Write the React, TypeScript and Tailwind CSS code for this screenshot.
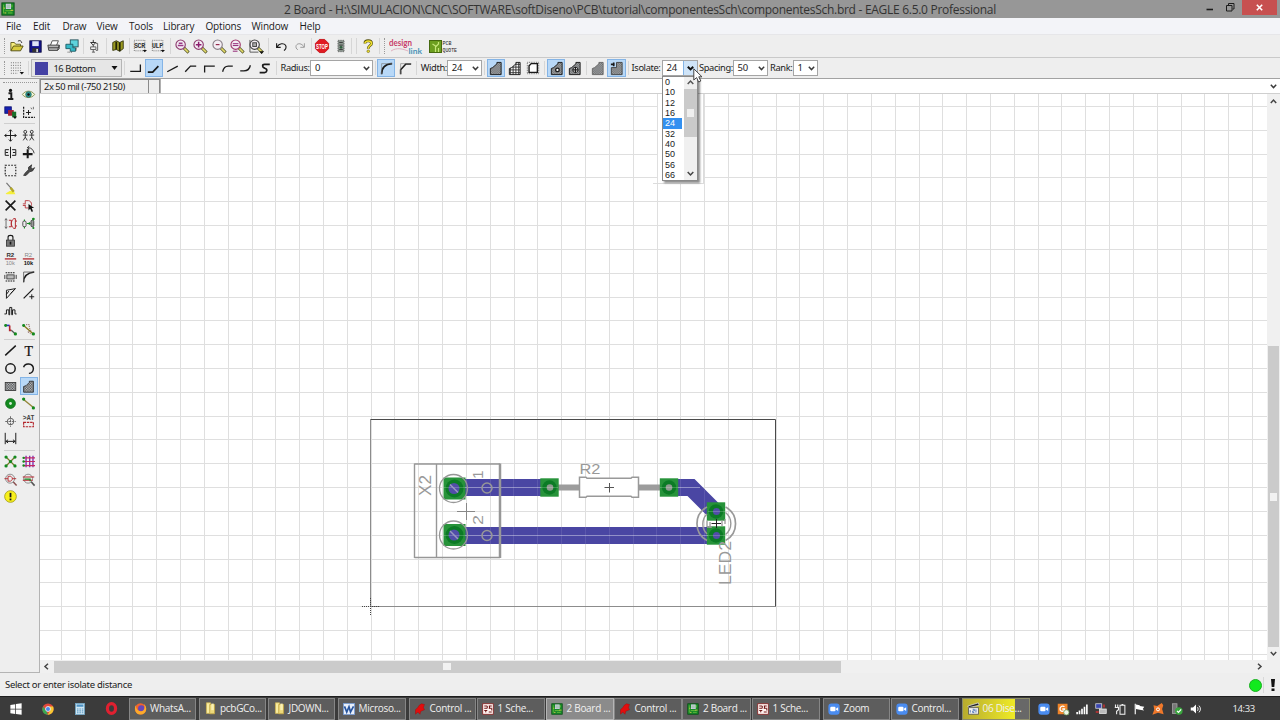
import type { ReactNode } from 'react'

function Icon({ children, size = 16 }: { children: ReactNode; size?: number }) {
  return (
    <svg width={size} height={size} viewBox="0 0 16 16" fill="none" stroke="#1a1a1a" strokeWidth="1" className="shrink-0 overflow-visible">
      {children}
    </svg>
  )
}

function Sep({ className = '' }: { className?: string }) {
  return (
    <div className={`flex h-full shrink-0 justify-center py-[3px] ${className}`}>
      <div className="w-px bg-[#d6d6d6]" />
    </div>
  )
}

function Handle({ className = '' }: { className?: string }) {
  return (
    <div className={`flex h-full shrink-0 justify-center py-[3px] ${className}`}>
      <div className="w-px border-l border-dotted border-[#9a9a9a]" />
    </div>
  )
}

function Tool({ children, active = false, className = 'w-[18.4px] h-[18px]' }: { children: ReactNode; active?: boolean; className?: string }) {
  return (
    <button className={`flex shrink-0 items-center justify-center ${className} ${active ? 'border border-[#84b4e6] bg-[#b8d8f7]' : ''}`}>
      {children}
    </button>
  )
}

function Chevron() {
  return (
    <svg width="7" height="5" viewBox="0 0 7 5" fill="none" stroke="#3a3a3a" strokeWidth="1.4" className="shrink-0">
      <path d="M0.8 0.7L3.5 3.6L6.2 0.7" />
    </svg>
  )
}

function Combo({ value, className }: { value: string; className: string }) {
  return (
    <div className={`flex h-[16px] shrink-0 items-center justify-between border border-[#a5a5a5] bg-white pt-px pr-[2px] pl-1 text-[9.5px] tracking-[-0.2px] ${className}`}>
      <span>{value}</span>
      <Chevron />
    </div>
  )
}

function Label({ children, className }: { children: string; className: string }) {
  return <span className={`shrink-0 text-[9.3px] tracking-[-0.38px] whitespace-nowrap ${className}`}>{children}</span>
}

/* ---------- shared glyphs ---------- */

function Hatch() {
  return (
    <defs>
      <pattern id="dots" width="2" height="2" patternUnits="userSpaceOnUse">
        <rect width="2" height="2" fill="#c4c8cc" />
        <rect width="1" height="1" fill="#4a4a4a" />
        <rect x="1" y="1" width="1" height="1" fill="#4a4a4a" />
      </pattern>
      <pattern id="mesh" width="3" height="3" patternUnits="userSpaceOnUse">
        <rect width="3" height="3" fill="#f8f8f8" />
        <path d="M0 0.5H3M0.5 0V3" stroke="#333" />
      </pattern>
    </defs>
  )
}

const POLY = 'M2.500 14.500V8L5 7L9.500 3V1.500H14V14.500Z'

function Lens({ color, children }: { color: string; children?: ReactNode }) {
  return (
    <Icon size={15}>
      <path d="M9.500 9.500L14.500 14.500" stroke="#55552a" strokeWidth="3.200" />
      <path d="M10 10L14 14" stroke="#e4dc6a" strokeWidth="1.600" />
      <circle cx="6" cy="6" r="5" fill="#f4eef4" stroke={color} strokeWidth="1.200" />
      {children}
    </Icon>
  )
}

function BoardIcon({ size = 13 }: { size?: number }) {
  return (
    <Icon size={size}>
      <rect x="1" y="1" width="14" height="14" fill="#18882a" stroke="#064d10" />
      <rect x="6" y="2.500" width="5" height="5" fill="#a8c9b4" stroke="#dce" />
      <path d="M3 3V13M5 10H12M12.500 3V6M8 12.500H13" stroke="#6fc43c" />
      <path d="M11 9.500H14M3 7H4.500M4 12.500H6" stroke="#f2d24c" />
    </Icon>
  )
}

function SchemIcon() {
  return (
    <Icon size={12}>
      <rect x="1" y="1" width="14" height="14" fill="#fff4f2" stroke="#8c1c1c" />
      <path d="M3 4H7V7H3M9 4H13M9 7H13V10M3 10H7M9 12H13M5 12.500V10M10 4V7" stroke="#6e1313" strokeWidth="1.300" />
    </Icon>
  )
}

function EagleIcon() {
  return (
    <Icon size={12}>
      <path d="M10 1L14 2L12.500 6L14 9L9 11L8 15L5 12L2 15L2 9L5 6L7 3Z" fill="#e20d0d" stroke="#a00" strokeWidth="0.500" />
    </Icon>
  )
}

function ZoomApp({ size = 13 }: { size?: number }) {
  return (
    <Icon size={size}>
      <rect x="0.500" y="0.500" width="15" height="15" rx="4" fill="#4a8cf0" stroke="none" />
      <rect x="3" y="5" width="7" height="6" rx="1.500" fill="#fff" stroke="none" />
      <path d="M10.500 7.500L13.500 5.500V10.500L10.500 8.500Z" fill="#fff" stroke="none" />
    </Icon>
  )
}

function FolderIcon() {
  return (
    <Icon size={13}>
      <path d="M3 1H8V14H3Z" fill="#f8eca0" stroke="#cdb455" />
      <path d="M7 3H13V14.500H7Z" fill="#ecd97a" stroke="#c2a443" />
      <path d="M9 2H12V10H9Z" fill="#f9f0b4" stroke="none" />
    </Icon>
  )
}

/* ---------- chrome ---------- */

function TitleBar() {
  return (
    <header className="relative flex h-[18px] shrink-0 items-center justify-between bg-[#979797]">
      <div className="pl-[1px]"><BoardIcon size={14} /></div>
      <h1 className="absolute inset-x-0 text-center text-[12px] leading-[19px] tracking-[-0.285px] text-[#333]" style={{ fontFamily: '"Open Sans", "Noto Sans", sans-serif' }}>
        2 Board - H:\SIMULACION\CNC\SOFTWARE\softDiseno\PCB\tutorial\componentesSch\componentesSch.brd - EAGLE 6.5.0 Professional
      </h1>
      <div className="relative flex h-full items-start">
        <svg width="36" height="15" viewBox="0 0 36 15" fill="none" stroke="#1c1c1c">
          <path d="M0.500 9.500H7" strokeWidth="1.600" />
          <path d="M20.500 5.500H26V11H20.500ZM22.500 5V3.500H28V9H26.500" />
        </svg>
        <div className="mr-[3px] flex h-[15px] w-[35px] items-center justify-center bg-[#c75050]">
          <svg width="7" height="7" viewBox="0 0 7 7" stroke="#fff" strokeWidth="1.600"><path d="M0.800 0.800L6.200 6.200M6.200 0.800L0.800 6.200" /></svg>
        </div>
      </div>
    </header>
  )
}

function MenuBar() {
  return (
    <nav className="flex h-[17px] shrink-0 items-center border-b border-[#e6e6e9] bg-[#f3f4f8] pt-[1px] pl-[6px] text-[10px] tracking-[-0.18px] text-[#1b1b1b]" style={{ fontFamily: '"Open Sans", "Noto Sans", sans-serif' }}>
      <span className="w-[27px]">File</span>
      <span className="w-[29.500px]">Edit</span>
      <span className="w-[34px]">Draw</span>
      <span className="w-[32.500px]">View</span>
      <span className="w-[34px]">Tools</span>
      <span className="w-[42.500px]">Library</span>
      <span className="w-[46px]">Options</span>
      <span className="w-[48px]">Window</span>
      <span>Help</span>
    </nav>
  )
}

function MainToolbar() {
  return (
    <div className="flex h-[23px] shrink-0 items-center border-b border-[#c9c9c9] bg-[#eee]">
      <Handle className="w-[8px]" />
      <Tool>
        <Icon size={14}><path d="M1 13V4H5L6.500 6H12V8" fill="#f6ee7c" stroke="#5b5712" /><path d="M1 13.500L4 8H15L12 13.500Z" fill="#d8cc3e" stroke="#4a460d" /><path d="M9 2.500C11 1 13 2 13.500 4.500" /></Icon>
      </Tool>
      <Tool>
        <Icon size={13}><rect x="1" y="1" width="14" height="14" fill="#14148c" stroke="#05053b" /><rect x="4" y="1.500" width="8" height="6" fill="#dfe4f6" stroke="none" /><rect x="4" y="10" width="8" height="5" fill="#333" stroke="none" /><rect x="9" y="11" width="2" height="4" fill="#ddd" stroke="none" /></Icon>
      </Tool>
      <Tool>
        <Icon size={14}><path d="M4 7L6 2H13L11 7" fill="#fff" stroke="#444" /><path d="M1 7H14L12 13H2Z" fill="#b5b5b5" stroke="#333" /><path d="M2 10H13M14 7V11L12 13" stroke="#333" /></Icon>
      </Tool>
      <Tool>
        <Icon size={14}><rect x="6" y="1" width="9" height="8" fill="#5ed3dc" stroke="#244c55" /><path d="M1 6H9V10H12V14H6V11H1Z" fill="#35b9c7" stroke="#1c5962" /><path d="M3 15H8M13 10V13" stroke="#333" strokeDasharray="1 1" /></Icon>
      </Tool>
      <Sep className="w-[3px]" />
      <Tool className="h-[18px] w-[20px]">
        <Icon size={14}><path d="M6 1V4M3 4H9L6 7ZM6 7V9" /><path d="M3 9H9V12H3ZM6 12V15M9 5H11V13H9M4.500 15H8" stroke="#555" /></Icon>
      </Tool>
      <Sep className="w-[4px]" />
      <Tool className="h-[18px] w-[19px]">
        <Icon size={14}><path d="M2 4L6 2L10 4L14 2V11L10 14L6 12L2 13Z" fill="#9a9a20" stroke="#34340a" /><path d="M6 3V12M10 4V14" stroke="#232305" strokeWidth="2" /></Icon>
      </Tool>
      <Sep className="w-[3px]" />
      {['SCR', 'ULP'].map((t) => (
        <Tool key={t}>
          <Icon size={14}>
            <rect x="1.500" y="1.500" width="12" height="12" stroke="#555" strokeDasharray="1 1.400" />
            <text x="1" y="9.800" fontSize="7.500" textLength="13" fontWeight="bold" fontFamily="Liberation Mono, monospace" fill="#333" stroke="none">{t}</text>
            <path d="M11 12.500H16L13.500 15Z" fill="#111" stroke="none" />
          </Icon>
        </Tool>
      ))}
      <Sep className="w-[6px]" />
      <Tool><Lens color="#8d3a6e"><path d="M3 7H9M4 4.500H8" stroke="#9a3a86" strokeWidth="1.500" /></Lens></Tool>
      <Tool><Lens color="#8d3a6e"><path d="M3 6H9M6 3V9" stroke="#8d1c6e" strokeWidth="1.600" /></Lens></Tool>
      <Tool><Lens color="#8a8088"><path d="M4 6H8" stroke="#8d1c3e" strokeWidth="1.200" /></Lens></Tool>
      <Tool><Lens color="#a03a6e"><path d="M3 5H9M3 7H9M3 13H8" stroke="#8d1c6e" /></Lens></Tool>
      <Tool><Lens color="#444"><rect x="4" y="4" width="4" height="4" fill="#aaa" stroke="#444" /><path d="M1 1V14H10" stroke="#555" /><path d="M11 13H16L13.500 16Z" fill="#111" stroke="none" /></Lens></Tool>
      <Sep className="w-[7px]" />
      <Tool><Icon size={13}><path d="M2 4V9H7M2.500 8.500C5 4 11 3.500 13 6.500C14.500 9 13 12 11 13" strokeWidth="1.400" /></Icon></Tool>
      <Tool><Icon size={13}><path d="M14 4V9H9M13.500 8.500C11 4 6 3.500 4 6.500C3 9 4 11 6 12" stroke="#9a9a9a" strokeWidth="1.200" /></Icon></Tool>
      <Sep className="w-[4px]" />
      <Tool>
        <Icon size={14}><path d="M5 0.500H11L15.500 5V11L11 15.500H5L0.500 11V5Z" fill="#e01b22" stroke="#c30d14" /><text x="1.200" y="10.900" fontSize="7.500" fontWeight="bold" textLength="13.600" lengthAdjust="spacingAndGlyphs" fontFamily="Liberation Sans, sans-serif" fill="#fff" stroke="none">STOP</text></Icon>
      </Tool>
      <Tool>
        <Icon size={14}><rect x="4.500" y="1.500" width="7" height="13" fill="#8b958e" stroke="#555" strokeDasharray="1 1" /><path d="M6 4H10M6 7H10M6 12H10" stroke="#333" /><circle cx="8" cy="9.500" r="1.500" fill="#2f5f3d" stroke="none" /></Icon>
      </Tool>
      <Sep className="w-[4px]" />
      <Sep className="w-[5px]" />
      <Tool className="h-[18px] w-[19px]">
        <Icon size={14}><path d="M4.500 5C4.500 1 12 1 12 5C12 7.500 8.300 7.500 8.300 11" stroke="#55500c" strokeWidth="3.200" /><path d="M4.500 5C4.500 1.500 12 1.500 12 5C12 7.500 8.300 7.500 8.300 11" stroke="#f0e030" strokeWidth="1.800" /><circle cx="8.300" cy="14" r="1.500" fill="#f0e030" stroke="#55500c" strokeWidth="0.600" /></Icon>
      </Tool>
      <Sep className="w-[4px]" />
      <Handle className="w-[5px]" />
      <svg width="36" height="18" viewBox="0 0 36 18" className="ml-[2px] shrink-0" fontFamily="Lato, sans-serif" fontWeight="bold">
        <text x="0" y="8.500" fontSize="9" textLength="23" lengthAdjust="spacingAndGlyphs" fill="#c8406a">design</text>
        <text x="19.500" y="16.500" fontSize="8" textLength="13.500" lengthAdjust="spacingAndGlyphs" fill="#4b94b8">link</text>
        <path d="M2 14C8 10 14 12 19 14" stroke="#dba0b4" strokeWidth="0.800" fill="none" />
      </svg>
      <svg width="30" height="16" viewBox="0 0 30 16" className="ml-[4px] shrink-0">
        <rect x="0.500" y="2.500" width="12" height="12" fill="#6c9e1f" stroke="#46690f" />
        <path d="M6.500 14V8L3.500 6M6.500 9L9.500 6V4M9.500 10V14" stroke="#c6e67a" strokeWidth="1.200" fill="none" />
        <text x="13.500" y="7" fontSize="6" textLength="9" lengthAdjust="spacingAndGlyphs" fontFamily="Liberation Mono, monospace" fill="#222">PCB</text>
        <text x="13.500" y="14" fontSize="6" textLength="14.500" lengthAdjust="spacingAndGlyphs" fontFamily="Liberation Mono, monospace" fill="#222">QUOTE</text>
      </svg>
    </div>
  )
}

const BENDS = [
  'M1.500 11.500H14V3',
  'M1 12.500H7L14 5',
  'M1.500 12L14.500 5',
  'M1.500 12L8 5H15',
  'M2 13V5H14.500',
  'M2 12C3 7 6 5 9 5H14.500',
  'M1.500 11H6C10 11 13 9 14 4',
  'M14.500 3H8C5 3 5 6.500 8 7.500L9 8C12 9 11 13 8 13H2',
]

function ParamToolbar() {
  return (
    <div className="relative z-20 flex h-[21px] shrink-0 items-center border-b border-[#a2a2a2] bg-[#eee]">
      <Handle className="w-[8px]" />
      <Tool>
        <Icon size={14}><path d="M1 2H13M1 5H13M1 8H13M1 11H13M1 14H9" stroke="#555" strokeDasharray="1 1.600" /><path d="M11 12.500H16L13.500 15.500Z" fill="#111" stroke="none" /></Icon>
      </Tool>
      <Sep className="w-[5px]" />
      <div className="flex h-[18px] w-[91px] shrink-0 items-center border border-[#b5b5b5] bg-[#e6e6e6] px-[3px]">
        <div className="h-[13px] w-[13px] bg-[#4542a4]" />
        <span className="ml-[5px] flex-1 pt-px text-[9.3px] tracking-[-0.4px]">16 Bottom</span>
        <svg width="7" height="4" viewBox="0 0 7 4"><path d="M0.500 0H6.500L3.500 4Z" fill="#111" /></svg>
      </div>
      <Sep className="w-[4px]" />
      {BENDS.map((d, i) => (
        <Tool key={d} active={i === 1}>
          <Icon size={13}><path d={d} strokeWidth={i === 1 || i === 7 ? 2.1 : 1.6} /></Icon>
        </Tool>
      ))}
      <Sep className="w-[5px]" />
      <Label className="w-[31.500px] pl-[2px]">Radius:</Label>
      <Combo value="0" className="w-[63px]" />
      <Sep className="w-[4px]" />
      <Tool active><Icon size={14}><path d="M3 15C3 8 7 3.500 15 3" strokeWidth="1.800" /><path d="M3 15V3H15" stroke="#777" strokeWidth="0.700" /></Icon></Tool>
      <Tool><Icon size={14}><path d="M3 15V10L9 3.500H15" strokeWidth="1.800" /><path d="M3 15V3H15" stroke="#777" strokeWidth="0.700" /></Icon></Tool>
      <Sep className="w-[5px]" />
      <Label className="w-[28px] pl-[2px]">Width:</Label>
      <Combo value="24" className="w-[35px]" />
      <Sep className="w-[5px]" />
      <Tool active><Icon size={15}><path d={POLY} fill="url(#dots)" /></Icon></Tool>
      <Tool><Icon size={15}><path d={POLY} fill="url(#mesh)" /></Icon></Tool>
      <Tool>
        <Icon size={14}><path d="M3.500 13V5.500L6 3H13V13Z" fill="#fff" strokeWidth="1.600" /><rect x="1.500" y="1.500" width="13" height="13" stroke="#555" strokeDasharray="1 1" /></Icon>
      </Tool>
      <Sep className="w-[5px]" />
      <Tool active><Icon size={15}><path d={POLY} fill="url(#dots)" /><circle cx="9" cy="9.500" r="1.900" fill="#fff" strokeWidth="1.400" /></Icon></Tool>
      <Tool><Icon size={15}><path d={POLY} fill="url(#dots)" /><circle cx="9" cy="9.500" r="2.800" fill="#fff" /><path d="M9 6.500V12.500M6 9.500H12" strokeWidth="1.300" /></Icon></Tool>
      <Sep className="w-[5px]" />
      <Tool><Icon size={15}><path d={POLY} fill="url(#dots)" stroke="#666" /></Icon></Tool>
      <Tool active><Icon size={15}><path d="M2.500 14.500V7L8 7V1.500H14V14.500Z" fill="url(#dots)" stroke="#444" /><path d="M2 3.500H6M5 1.500V5.500" strokeWidth="1.800" /></Icon></Tool>
      <Sep className="w-[5px]" />
      <Label className="w-[31px] pl-[1px]">Isolate:</Label>
      <IsolateCombo />
      <Label className="w-[35px] pl-[1.500px]">Spacing:</Label>
      <Combo value="50" className="w-[35px]" />
      <Label className="w-[25px] pl-[2.500px]">Rank:</Label>
      <Combo value="1" className="w-[25px]" />
    </div>
  )
}

const ISOLATE = ['0', '10', '12', '16', '24', '32', '40', '50', '56', '66']

function IsolateCombo() {
  return (
    <div className="relative h-[16px] w-[36px] shrink-0">
      <div className="flex h-full border border-[#a5a5a5] bg-white text-[9.5px] tracking-[-0.2px]">
        <span className="flex w-[20px] items-center pt-px pl-1">24</span>
        <span className="flex flex-1 items-center justify-center border-l border-[#84b4e6] bg-[#cfe4f8]">
          <svg width="7" height="5" viewBox="0 0 7 5" fill="none" stroke="#111" strokeWidth="2"><path d="M0.800 0.700L3.500 3.400L6.200 0.700" /></svg>
        </span>
      </div>
      <div className="absolute top-[16px] left-0 flex h-[105px] w-[36px] border border-[#8a8a8a] bg-white shadow-[2px_2px_2px_rgba(0,0,0,0.45)]">
        <ul className="w-[21px] text-[9px] leading-[10.35px]" style={{ fontFamily: '"Liberation Sans", sans-serif' }}>
          {ISOLATE.map((v) => (
            <li key={v} className={`h-[10.35px] pl-[2.5px] ${v === '24' ? 'mr-[1.5px] bg-[#3390f0] text-white' : ''}`}>{v}</li>
          ))}
        </ul>
        <div className="flex flex-1 flex-col items-center bg-[#f0f0f0]">
          <svg width="7" height="12" viewBox="0 0 7 12" fill="none" stroke="#555" strokeWidth="1.500" className="shrink-0"><path d="M0.700 7L3.500 4L6.300 7" /></svg>
          <div className="flex h-[48px] w-full items-center justify-center bg-[#cacaca]">
            <div className="h-[8px] w-[7px] bg-[#efefef]" />
          </div>
          <svg width="7" height="6" viewBox="0 0 7 6" fill="none" stroke="#444" strokeWidth="1.500" className="mt-auto mb-[3px]"><path d="M0.700 1L3.500 4L6.300 1" /></svg>
        </div>
      </div>
      {/* mouse pointer over the arrow button */}
      <svg width="13" height="18" viewBox="0 0 13 18" className="absolute top-[8px] left-[31px]">
        <path d="M0.800 0.800V12L3.600 9.600L5.600 14L7.800 13L5.800 8.800H9Z" fill="#fff" stroke="#444" />
      </svg>
    </div>
  )
}

function CommandRow() {
  return (
    <div className="flex h-[15px] shrink-0 border-b border-[#cfcfcf] bg-[#eee]">
      <div className="w-[108px] border-t border-l border-[#8a8a8a] pl-[3px] text-[9.3px] leading-[13px] whitespace-nowrap">
        <span className="tracking-[-0.43px]">2x 50 mil (-750 2150)</span>
      </div>
      <div className="w-[12px] border-t border-x border-[#8a8a8a]" />
      <div className="flex flex-1 items-center justify-end border-l border-[#b0b0b0] bg-white pr-[3px]"><Chevron /></div>
    </div>
  )
}

/* ---------- left palette ---------- */

const RED = '#b3262c'
const GREEN = '#138a1f'

const GROUP_A: ReactNode[] = [
  <><circle cx="8" cy="3" r="2" fill="#111" stroke="none" /><path d="M5.500 6.500H9V13M5 13.500H11.500" strokeWidth="2.400" /></>,
  <><path d="M0.500 8C4 2.500 12 2.500 15.500 8C12 13 4 13 0.500 8Z" fill="#f5f7d8" stroke="#71803a" /><circle cx="8" cy="8" r="3.400" fill="#35a5a0" stroke="#14605c" /><circle cx="8" cy="8" r="1.300" fill="#111" /></>,
  <><rect x="1" y="1" width="8" height="8" fill="#1520b0" stroke="#0a1070" /><rect x="5" y="5" width="7" height="7" fill="#a41f30" stroke="none" /><rect x="10" y="7" width="5" height="7" fill="#17702a" stroke="none" /><path d="M11 13H16L13.500 16Z" fill="#111" stroke="none" /></>,
  <><path d="M2 1V14H16" strokeDasharray="2.500 1.200" strokeWidth="1.500" /><path d="M5 8H11M8 5V11" strokeWidth="1.200" /><path d="M11 2L12 4M14 1V4" stroke="#555" /></>,
]

const GROUP_B: ReactNode[] = [
  <path d="M8 1V15M1 8H15M6 3L8 1L10 3M6 13L8 15L10 13M3 6L1 8L3 10M13 6L15 8L13 10" strokeWidth="1.200" />,
  <><circle cx="4" cy="3.500" r="1.800" /><circle cx="12" cy="3.500" r="1.800" /><path d="M4 5V10L1.500 14M4 10L6.500 14M1 7.500H7M12 5V10L9.500 14M12 10L14.500 14M9 7.500H15" /></>,
  <path d="M8 1V15M6 4.500H1.500V11.500H6M10 4.500H14.500V11.500H10M2 8H5M11 8H14" strokeWidth="1.200" />,
  <><path d="M7 4V15M1 10H13" strokeWidth="2.500" /><path d="M7 2C12 2 14 5 15 9M9 0L6.500 2L9 4" /></>,
  <rect x="1.500" y="1.500" width="13" height="13" strokeDasharray="2 1.700" strokeWidth="1.400" />,
  <path d="M2 14L4 11L8 7V4L12 1L11 4L13 6L15.500 4.500L13 8.500L9.500 9.500L5 14Z" fill="#4a4a4a" stroke="#333" />,
  <><path d="M2 14L7 11H12L14 15H3Z" fill="#f5ef3c" stroke="none" /><path d="M3 1L10 9" stroke="#777" strokeWidth="1.500" /><path d="M8 7L12 12" stroke="#b3a82b" strokeWidth="3" /></>,
  null,
  <path d="M2 2L14 14M14 2L2 14" strokeWidth="2" />,
  <><path d="M1 6H4V2H8C13 3 13 10 8 11H4V7M1 8H4" stroke={RED} /><path d="M8 6V14L10 12L12 16L13.500 15L12 11H15Z" fill="#111" stroke="none" /></>,
  <><path d="M6 4H9V12H6M14 2H12C8 5 8 11 12 14H14V2M14 5H16M14 11H16" stroke={RED} strokeWidth="1.200" /><path d="M2.500 2V14M1 4L2.500 2L4 4M1 12L2.500 14L4 12" stroke="#555" /></>,
  <><rect x="1" y="5" width="4" height="7" rx="1.500" stroke="#333" /><path d="M3 3V5M3 12V14M6 8H10M8.500 6.500L10 8L8.500 9.500" stroke={GREEN} strokeWidth="1.300" /><rect x="11" y="4" width="3.500" height="8" rx="1.500" fill="#999" stroke="#333" /><circle cx="14" cy="2.500" r="1.700" fill={GREEN} stroke="none" /><circle cx="14" cy="13.500" r="1.300" fill={GREEN} stroke="none" /></>,
  <><path d="M5 8V4C5 1 11 1 11 4V8" strokeWidth="1.400" /><rect x="3" y="7.500" width="10" height="7.500" fill="#777" stroke="#333" /><path d="M8 9.500V13" strokeWidth="2" /></>,
  null,
  <><text x="3" y="6.500" fontSize="7.500" fontWeight="bold" fontFamily="Liberation Sans, sans-serif" fill="#333" stroke="none">R2</text><path d="M1 8.500H15" stroke={RED} strokeWidth="1.600" /><text x="2" y="16" fontSize="7" fontFamily="Liberation Sans, sans-serif" fill="#888" stroke="none">10k</text></>,
  <><text x="3" y="6.500" fontSize="7.500" fontFamily="Liberation Sans, sans-serif" fill="#888" stroke="none">R2</text><path d="M1 8.500H15" stroke={RED} strokeWidth="1.600" /><text x="2" y="16" fontSize="7" fontWeight="bold" fontFamily="Liberation Sans, sans-serif" fill="#111" stroke="none">10k</text></>,
  <><rect x="3.500" y="6" width="9" height="5" fill="#bbb" stroke="#333" /><path d="M2 3.500H14M2 13.500H14" strokeDasharray="2 1" strokeWidth="1.300" /><path d="M1 6V11M15 6V11" /></>,
  <><path d="M2 15C2 8 7 3.500 15 2.500" strokeWidth="1.700" /><path d="M2 15V2.500H15" stroke="#555" /></>,
  <path d="M3 14V4L14 2L3 14M6 5L3 9M8 8L14 2" strokeWidth="1.200" />,
  <><path d="M2 14L14 2" strokeWidth="1.600" /><path d="M9 12H15M12 9V15" strokeWidth="1.200" /></>,
  <path d="M0.500 11H3V6H6V12H7V3H9.500V12H10.500V6H13.500V11H15.500" strokeWidth="1.200" />,
  null,
  <><path d="M2 3H7" stroke="#2430c0" strokeWidth="2" /><path d="M7 3V9H9" stroke={RED} strokeWidth="2" /><path d="M9 9L14 13.500" stroke="#555" strokeWidth="1.500" /><circle cx="2" cy="3" r="1.800" fill={GREEN} stroke="none" /><circle cx="14" cy="13.500" r="2" fill={GREEN} stroke="none" /></>,
  <><path d="M2 3L14 13.500" stroke="#8a7c20" strokeWidth="1.800" /><path d="M5 2H9V6L11 9L7 11L12 14" stroke="#7a4a40" strokeDasharray="1.500 1.200" /><circle cx="2" cy="3" r="1.800" fill={GREEN} stroke="none" /><circle cx="14" cy="13.500" r="2" fill={GREEN} stroke="none" /></>,
]

const GROUP_C: ReactNode[] = [
  <path d="M1.500 14L14.500 2" strokeWidth="1.800" />,
  <text x="3" y="14.500" fontSize="17" fontFamily="Liberation Serif, serif" fill="#111" stroke="#111" strokeWidth="0.300">T</text>,
  <circle cx="8" cy="8" r="5.800" strokeWidth="1.800" />,
  <path d="M2 6.500C3.500 0.500 13.500 1 14 8C14 12 11 14 8.500 14" strokeWidth="1.800" />,
  <rect x="1.500" y="3" width="13" height="10" fill="url(#dots)" stroke="#333" />,
  <path d="M2 15V8L5 7L9 3V1.500H14V15Z" fill="url(#dots)" stroke="#222" />,
  <><circle cx="8" cy="8" r="6" fill={GREEN} stroke="#0a6a14" /><circle cx="8" cy="8" r="1.700" fill="#d8ecd8" stroke="none" /></>,
  <><path d="M2 3L14 13" stroke="#94873a" strokeWidth="1.700" /><circle cx="2" cy="2.500" r="2" fill={GREEN} stroke="none" /><circle cx="14" cy="13.500" r="2" fill={GREEN} stroke="none" /></>,
  <><circle cx="8" cy="8" r="4" stroke="#444" /><path d="M8 1.500V14.500M1.500 8H14.500" stroke="#555" strokeDasharray="3 1" /></>,
  <><text x="1" y="6.500" fontSize="8" fontFamily="Liberation Mono, monospace" fontWeight="bold" fill="#444" stroke="none">&gt;AT</text><rect x="2" y="9" width="12" height="5.500" stroke={RED} strokeWidth="1.400" strokeDasharray="3 1" /></>,
  <path d="M1.500 1V15M14.500 1V15M2 11.500H14M5 9.500L2.500 11.500L5 13.500M11 9.500L13.500 11.500L11 13.500" strokeWidth="1.200" />,
]

const GROUP_D: ReactNode[] = [
  <><path d="M2.500 2.500L13.500 13.500M13.500 2.500L2.500 13.500" stroke="#75772a" strokeWidth="1.500" /><g fill={GREEN} stroke="none"><circle cx="2.500" cy="2.500" r="2" /><circle cx="13.500" cy="2.500" r="2" /><circle cx="2.500" cy="13.500" r="2" /><circle cx="13.500" cy="13.500" r="2" /><circle cx="8" cy="8" r="2" /></g></>,
  <><path d="M5 1V15M9.500 1V15M13.500 1V15" stroke="#7a25b0" strokeWidth="1.600" /><path d="M2 3.500H16M2 8H16M2 13H16" stroke="#c32a62" strokeWidth="1.500" /><g fill={GREEN} stroke="none"><circle cx="2" cy="3.500" r="1.500" /><circle cx="2" cy="8" r="1.500" /><circle cx="2" cy="13" r="1.500" /></g></>,
  <><circle cx="7.500" cy="7" r="5.500" stroke="#777" /><path d="M0.500 7H5V4H8C11 5 11 9 8 10H5V7M10 7H15" stroke={RED} strokeWidth="1.100" /><path d="M11.500 11L15.500 15.500" stroke="#8a5050" strokeWidth="1.800" /></>,
  <><circle cx="7.500" cy="7" r="5.500" stroke="#777" /><path d="M1 5H15M1 9H13" stroke={RED} strokeWidth="1.300" /><path d="M3 7.500H10V10" stroke={GREEN} strokeWidth="1.500" /><path d="M11.500 11L15.500 15.500" stroke="#555" strokeWidth="2" /></>,
  <><circle cx="8" cy="8" r="7.200" fill="#f8f01c" stroke="#a09a1a" /><path d="M8 3.500V9" strokeWidth="2.200" /><path d="M8 10.500V12.700" strokeWidth="2.200" /></>,
]

function IconGrid({ icons, activeAt }: { icons: ReactNode[]; activeAt?: number }) {
  return (
    <div className="grid grid-cols-[18.5px_18.5px] auto-rows-[17.65px]">
      {icons.map((icon, i) => (
        <Tool key={i} active={i === activeAt} className="h-full w-full">
          {icon && <Icon size={13}>{icon}</Icon>}
        </Tool>
      ))}
    </div>
  )
}

function Palette() {
  return (
    <aside className="flex w-[40px] shrink-0 flex-col border-r border-b border-[#b4b4b4] bg-[#eee] pl-[1px]">
      <div className="mt-[3px] mb-[3px] ml-[2px] h-px w-[34px] border-t border-dotted border-[#999]" />
      <IconGrid icons={GROUP_A} />
      <div className="mt-[2px] mb-[2px] ml-[3px] h-px w-[31px] bg-[#cfcfcf]" />
      <IconGrid icons={GROUP_B} />
      <div className="my-[1.5px] ml-[3px] h-px w-[31px] bg-[#cfcfcf]" />
      <IconGrid icons={GROUP_C} activeAt={5} />
      <div className="my-[2px] ml-[3px] h-px w-[31px] bg-[#cfcfcf]" />
      <IconGrid icons={GROUP_D} />
    </aside>
  )
}

/* ---------- board drawing ---------- */

const PITCH = 23.82
const COLS = Array.from({ length: 52 }, (_, i) => 61 + Math.round(i * PITCH))
const ROWS = Array.from({ length: 24 }, (_, i) => 106 + Math.round(i * PITCH))

function Grid() {
  return (
    <g stroke="#dfdfdf" strokeWidth="1">
      {COLS.map((x) => <path key={x} d={`M${x + 0.5} 94V660`} />)}
      {ROWS.map((y) => <path key={y} d={`M40 ${y + 0.5}H1267`} />)}
    </g>
  )
}

function Pad({ x, y, r }: { x: number; y: number; r: number }) {
  return (
    <g>
      <rect x={x - r} y={y - r} width={r * 2} height={r * 2} fill="#27933a" />
      <circle cx={x} cy={y} r={r - 2} fill="#0c7b26" />
    </g>
  )
}

function Board() {
  return (
    <svg viewBox="40 94 1227 566" width="1227" height="566" className="block bg-white" fontFamily="Liberation Sans, sans-serif">
      <Grid />
      <rect x="658" y="94" width="45" height="89" fill="#fff" />
      <path d="M653 183.500H704M703.500 94V183" stroke="#dcdcdc" fill="none" />

      <path d="M370.500 419.500V606.500H775.500" stroke="#8c8c8c" fill="none" />
      <path d="M370.500 419.500H775.500V606.500" stroke="#4a4a4a" fill="none" />
      <path d="M362 606.500H380M370.500 598V615" stroke="#444" strokeDasharray="1 1" />

      {/* bottom copper */}
      <path d="M454 487.500H549M454 535.500H716" stroke="#4a46a3" strokeWidth="17" fill="none" />
      <path d="M669 487.500H691L715 511.500" stroke="#4a46a3" strokeWidth="17" fill="none" />

      {/* resistor leads and body */}
      <path d="M558 487.500H579M639 487.500H661" stroke="#9c9c9c" strokeWidth="6" />
      <path d="M579.500 477.300H586L587 478.300H631L632 477.300H638.500V497.300H632L631 496.300H587L586 497.300H579.500Z" fill="#fff" stroke="#999" strokeWidth="1.500" />

      <Pad x={454.5} y={488.5} r={11} />
      <Pad x={454.5} y={535} r={11} />
      <Pad x={549.5} y={487.5} r={9.2} />
      <Pad x={669} y={487.5} r={9.2} />
      <Pad x={716} y={511.5} r={9.2} />
      <Pad x={716} y={535.5} r={9.2} />
      <g fill="#514da8">
        <circle cx="454" cy="488.500" r="5.500" />
        <circle cx="454" cy="535" r="5.500" />
        <circle cx="716.500" cy="511.500" r="3.500" />
        <circle cx="716.500" cy="535.500" r="3.500" />
      </g>
      <g fill="#8f9a90">
        <circle cx="550" cy="487.500" r="3.300" />
        <circle cx="669" cy="487.500" r="3.300" />
      </g>

      {/* grid showing through the copper */}
      <g stroke="#fff">
        <path d="M465 487.500H541M678 487.500H700M465 535.500H708" strokeOpacity="0.4" />
        <path d="M443 487.500H465M541 487.500H558M660 487.500H678M443 535.500H465M708 535.500H726M708 511.500H726" strokeOpacity="0.2" />
        <path d="M466.500 479V496M490.500 479V496M513.500 479V496M537.500 479V496M680.500 479V496M704.500 490V512M466.500 527V544M490.500 527V544M513.500 527V544M537.500 527V544M561.500 527V544M585.500 527V544M609.500 527V544M633.500 527V544M656.500 527V544M680.500 527V544M704.500 527V544" strokeOpacity="0.1" />
      </g>

      {/* terminal block silkscreen */}
      <g stroke="#979797" fill="none">
        <path d="M414.500 464H500M414.500 557.500H500M414.500 463.500V558M436.500 464V557" strokeWidth="1.400" />
        <path d="M500 463.500V558" strokeWidth="2.500" />
        <circle cx="453.500" cy="488.500" r="14" strokeWidth="1.300" />
        <circle cx="453.500" cy="535" r="14" strokeWidth="1.300" />
        <circle cx="487" cy="488" r="5" strokeWidth="1.500" />
        <circle cx="487" cy="535.500" r="5" strokeWidth="1.500" />
        <path d="M450 484.500L458 492.500M450 531L458 539" stroke="#9a97c0" strokeWidth="1.500" />
        <path d="M457 511.500H475M466.500 503V520" stroke="#888" />
      </g>
      <path d="M604.500 487.500H614M609.500 483V492.500" stroke="#555" />

      {/* led silkscreen */}
      <g stroke="#999" fill="none">
        <path d="M707 540.500A19 19 0 0 1 707 507M725.500 507A19 19 0 0 1 725.500 540.500" strokeWidth="1.700" />
        <path d="M707 534A14 14 0 0 1 707 514M725.500 512.500A14 14 0 0 1 725.500 534.500" strokeWidth="1.400" />
        <path d="M707 520.500V527M710 522V528M722 520V526M725 519V524M707 527H712" strokeWidth="1.300" />
      </g>
      <path d="M711.500 523.500H721M716.500 519V528" stroke="#222" />

      <g fill="#999">
        <text x="579.500" y="474" fontSize="15" textLength="21" lengthAdjust="spacingAndGlyphs">R2</text>
        <text transform="translate(431 496) rotate(-90)" fontSize="17" textLength="21" lengthAdjust="spacingAndGlyphs">X2</text>
        <text transform="translate(482.500 479) rotate(-90)" fontSize="15.500">1</text>
        <text transform="translate(482.500 525) rotate(-90)" fontSize="15.500" textLength="10" lengthAdjust="spacingAndGlyphs">2</text>
        <text transform="translate(731 585) rotate(-90)" fontSize="17" textLength="44" lengthAdjust="spacingAndGlyphs">LED2</text>
      </g>
    </svg>
  )
}

function Arrow({ d }: { d: string }) {
  return (
    <svg width="7" height="7" viewBox="0 0 7 7" fill="none" stroke="#444" strokeWidth="1.500" className="shrink-0"><path d={d} /></svg>
  )
}

function Workspace() {
  return (
    <div className="flex min-h-0 flex-1">
      <Palette />
      <div className="flex min-w-0 flex-1 flex-col">
        <CommandRow />
        <div className="flex h-[566px]">
          <div className="w-[1227px] shrink-0"><Board /></div>
          <div className="flex flex-1 flex-col items-center bg-[#f0f0f0] pt-[4px] pb-[3px]">
            <Arrow d="M0.800 5L3.500 2L6.200 5" />
            <div className="mt-[241px] flex h-[301px] w-[11px] items-center justify-center bg-[#cbcbcb]">
              <div className="h-[8px] w-[7px] bg-[#f2f2f2]" />
            </div>
            <div className="mt-auto"><Arrow d="M0.800 2L3.500 5L6.200 2" /></div>
          </div>
        </div>
        <div className="flex flex-1 items-center bg-[#f0f0f0] pl-[3px]">
          <Arrow d="M5 0.800L2 3.500L5 6.200" />
          <div className="ml-[4px] flex h-[12px] w-[787px] items-center justify-center bg-[#cbcbcb]">
            <div className="mr-[1px] h-[7px] w-[8px] bg-[#f2f2f2]" />
          </div>
          <div className="mr-[17px] ml-auto"><Arrow d="M2 0.800L5 3.500L2 6.200" /></div>
        </div>
      </div>
    </div>
  )
}

function StatusBar() {
  return (
    <footer className="flex h-[23px] shrink-0 items-center bg-[#eee] pt-[1px] pr-[2px] pl-[5px] text-[9.5px] text-[#1b1b1b]">
      <span className="flex-1 pt-[1px] tracking-[-0.3px]">Select or enter isolate distance</span>
      <div className="h-[13px] w-[13px] rounded-full border border-[#1ab021] bg-[#12ea1e]" />
      <div className="mr-[4px] ml-[1px] h-[16px] w-px bg-[#d8d8d8]" />
      <svg width="10" height="14" viewBox="0 0 10 14" fill="#111"><path d="M3 1H7L6.300 9H3.700ZM3.500 10.500H6.500V13H3.500Z" /></svg>
    </footer>
  )
}

/* ---------- taskbar ---------- */

const TASKS: { label: string; icon: ReactNode; box: string }[] = [
  { label: 'WhatsA...', box: 'w-[67px]', icon: <Icon size={13}><circle cx="8" cy="8.500" r="7" fill="#f2642c" stroke="none" /><circle cx="9" cy="8" r="4" fill="#6847b8" stroke="none" /><path d="M2 4C3 10 6 12 10 11C13 10 14 6 12 2C17 6 16 15 8 15.500C2 15.500 0 9 2 4Z" fill="#fbaa2b" stroke="none" /></Icon> },
  { label: 'pcbGCo...', box: 'ml-[3px] w-[67px]', icon: <FolderIcon /> },
  { label: 'JDOWN...', box: 'ml-[1.5px] w-[67px]', icon: <FolderIcon /> },
  { label: 'Microso...', box: 'ml-[3px] w-[68px]', icon: <Icon size={12}><rect x="0.500" y="0.500" width="15" height="15" fill="#e8effa" stroke="#6f96d2" /><path d="M2 4.500L5 12L8 5L10 12L14 4.500" stroke="#27559f" strokeWidth="2.200" /></Icon> },
  { label: 'Control ...', box: 'ml-[3px] w-[67px]', icon: <EagleIcon /> },
  { label: '1 Sche...', box: 'ml-[1px] w-[68px]', icon: <SchemIcon /> },
  { label: '2 Board ...', box: 'ml-[1px] w-[68px]', icon: <BoardIcon size={12} /> },
  { label: 'Control ...', box: 'w-[68.5px]', icon: <EagleIcon /> },
  { label: '2 Board ...', box: 'w-[68.5px]', icon: <BoardIcon size={12} /> },
  { label: '1 Sche...', box: 'ml-[1px] w-[68px]', icon: <SchemIcon /> },
  { label: 'Zoom', box: 'ml-[3px] w-[67px]', icon: <ZoomApp size={12} /> },
  { label: 'Control...', box: 'ml-[1px] w-[68px]', icon: <ZoomApp size={12} /> },
  { label: '06 Dise...', box: 'ml-[3px] w-[68px]', icon: <Icon size={13}><path d="M1 5L14 1L15 4L2 7Z" fill="#222" stroke="#ddd" /><rect x="2" y="7" width="12" height="8" fill="#f2f2f2" stroke="#555" /><path d="M4 10V13M7 9H9V11H7V13H9M11 9V13" stroke="#3a66b0" /></Icon> },
]

const TRAY: ReactNode[] = [
  <ZoomApp size={16} />,
  <><rect x="1" y="1" width="13" height="14" fill="#ef8429" stroke="none" /><path d="M10 5C7 3 4 5 4 8C4 11 7 12 10 10V8H7" stroke="#fff" strokeWidth="1.800" /><circle cx="12.500" cy="12.500" r="3.500" fill="#eef6ea" stroke="#6a9b52" /></>,
  <path d="M1.500 15V12M4.700 15V10M8 15V7.500M11.300 15V5M14.500 15V2" stroke="#fff" strokeWidth="2.200" />,
  <><rect x="1" y="1" width="8" height="6" fill="#3b47b0" stroke="#ddd" /><rect x="6" y="8" width="9" height="6" fill="#bbb" stroke="#eee" /><path d="M12 2V6M1 12H5" stroke="#c33" strokeWidth="2" /></>,
  <><rect x="8" y="3" width="6.500" height="12" stroke="#eee" strokeWidth="1.400" /><path d="M10 2H12.500M2 2V6M5 2V6M1 6H6V9L3.500 11V15" stroke="#eee" strokeWidth="1.500" /></>,
  <><path d="M3 1V15" stroke="#fff" strokeWidth="1.500" /><path d="M4 2L9 3V4L15 5L13 8L15 10L9 9L4 8Z" fill="#fff" stroke="none" /></>,
  <><path d="M2 3L7 4L13 0L15 3L13.500 8L15.500 15L8 13L0.500 15.500L3 9Z" fill="#f0782a" stroke="none" /><circle cx="8" cy="8.500" r="2" stroke="#fff" strokeWidth="1.300" /></>,
  <><rect x="2" y="1" width="6" height="13" fill="#777" stroke="#aaa" /><circle cx="10.500" cy="10.500" r="5" fill="#39a53d" stroke="none" /><path d="M8 10.500L10 12.500L13.500 8.500" stroke="#fff" strokeWidth="1.700" /></>,
  <><path d="M1 6H4L8 2V14L4 10H1Z" fill="#fff" stroke="none" /><path d="M10 5.500C11 7 11 9 10 10.500M12 3.500C14.500 6 14.500 10 12 12.500" stroke="#eee" strokeWidth="1.300" /></>,
]

function Taskbar() {
  return (
    <div className="flex h-[24px] shrink-0 items-center border-t border-[#1e1e1e] bg-[#3b3b3b] text-[10px] tracking-[-0.3px] text-[#f0f0f0]" style={{ fontFamily: '"Open Sans", "Noto Sans", sans-serif' }}>
      <div className="flex w-[129px] shrink-0 items-center">
        <div className="flex w-[32px] justify-center"><Icon size={12}><path d="M0.500 2.500L7 1.500V7.500H0.500ZM8 1.300L15.500 0.300V7.500H8ZM0.500 8.500H7V14.500L0.500 13.500ZM8 8.500H15.500V15.700L8 14.700Z" fill="#fff" stroke="none" /></Icon></div>
        <div className="flex w-[32px] justify-center"><Icon size={12}><circle cx="8" cy="8" r="7.500" fill="#e2483a" stroke="none" /><path d="M1.500 4.500L6 11L8 15.500C2 15.500 -1.500 9.500 1.500 4.500Z" fill="#39a853" stroke="none" /><path d="M8 4.500H14.800C17 10 13.500 15.500 7.500 15.500L11 9.500Z" fill="#f7c832" stroke="none" /><circle cx="8" cy="8" r="3.300" fill="#4a86e8" stroke="#fff" /></Icon></div>
        <div className="flex w-[32px] justify-center"><Icon size={12}><rect x="2" y="0.500" width="12" height="15" fill="#cfe6f3" stroke="#6ea6c8" /><rect x="3.500" y="2" width="9" height="3" fill="#4e92c4" stroke="none" /><path d="M4 8H12.500M4 10.500H12.500M4 13H12.500" stroke="#5f9cc5" strokeWidth="1.500" strokeDasharray="2 1.200" /></Icon></div>
        <div className="flex w-[30px] justify-center"><Icon size={13}><ellipse cx="8" cy="8" rx="5" ry="6" stroke="#e02030" strokeWidth="4" /></Icon></div>
      </div>
      {TASKS.map((t, i) => (
        <div
          key={i}
          className={`flex h-[22px] shrink-0 items-center border pl-[4px] whitespace-nowrap ${t.box} ${
            i === 6 ? 'border-[#b5b5b5] bg-[#8b8b8b]' : i === 12 ? 'border-[#8c8c6a] bg-linear-to-r from-[#b8ac2e] from-0% via-[#eeea24] via-78% to-[#686868] to-79%' : 'border-[#868686] bg-[#5d5d5d]'
          }`}
        >
          <span className="flex w-[16px]">{t.icon}</span>
          <span>{t.label}</span>
        </div>
      ))}
      <div className="ml-[5px] flex shrink-0">
        {TRAY.map((icon, i) => (
          <div key={i} className="flex w-[19px] justify-center"><Icon size={12}>{icon}</Icon></div>
        ))}
      </div>
      <span className="ml-[27px] pt-px text-[9.5px] tracking-[-0.4px]">14:33</span>
    </div>
  )
}

export default function App() {
  return (
    <div className="flex h-[720px] w-[1280px] flex-col overflow-hidden bg-[#eee] text-[#1b1b1b]" style={{ fontFamily: '"Noto Sans", "Open Sans", sans-serif' }}>
      <svg width="0" height="0" className="absolute"><Hatch /></svg>
      <TitleBar />
      <MenuBar />
      <MainToolbar />
      <ParamToolbar />
      <Workspace />
      <StatusBar />
      <Taskbar />
    </div>
  )
}
